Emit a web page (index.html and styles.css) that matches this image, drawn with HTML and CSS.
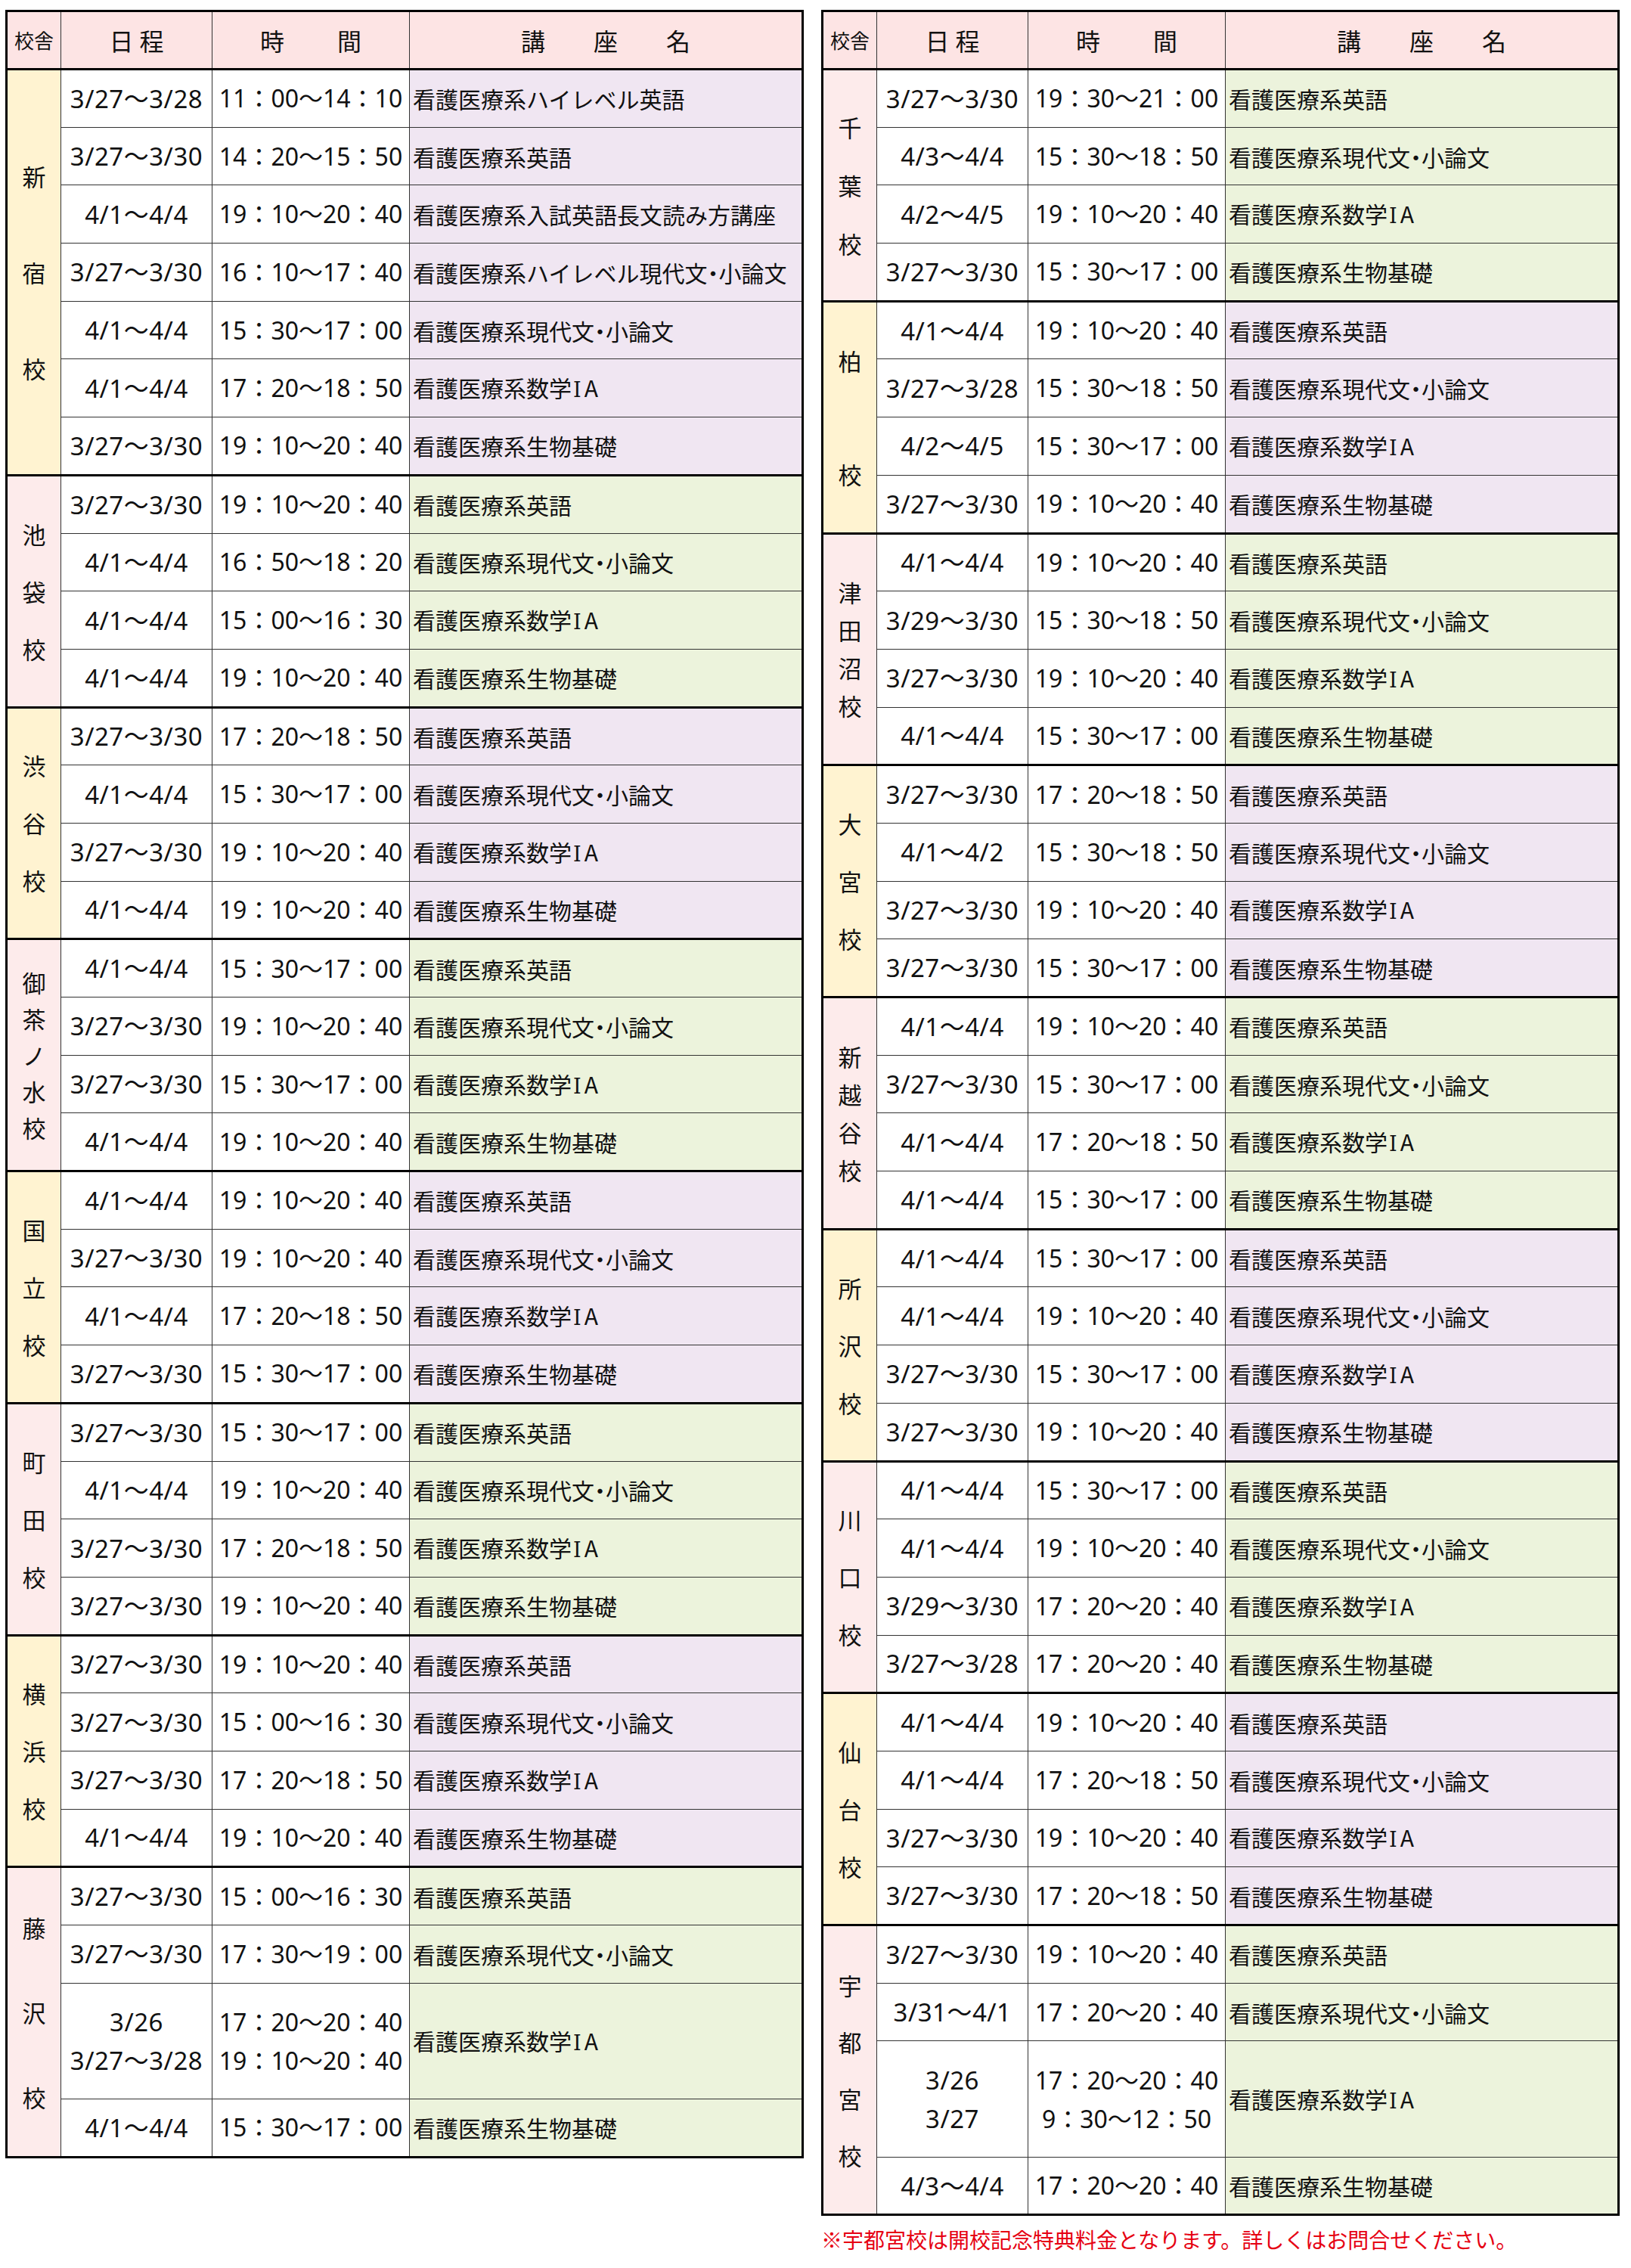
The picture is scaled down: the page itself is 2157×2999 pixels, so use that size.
FILE: index.html
```html
<!DOCTYPE html>
<html lang="ja">
<head>
<meta charset="utf-8">
<title>看護医療系 春期講習 日程</title>
<link rel="stylesheet" href="styles.css">
</head>
<body>
<div class="page">
  <div class="col">
    <table class="sched">
      <colgroup><col class="c1"><col class="c2"><col class="c3"><col class="c4"></colgroup>
      <thead>
        <tr><th class="h-campus">校舎</th><th><span class="g1">日</span>程</th><th><span class="g2">時</span>間</th><th><span class="g3">講</span><span class="g3">座</span>名</th></tr>
      </thead>
      <tbody class="grp purple">
        <tr><td class="campus" rowspan="7"><div class="vn lh127">新<br>宿<br>校</div></td><td class="date">3/27〜3/28</td><td class="time">11：00〜14：10</td><td class="course">看護医療系ハイレベル英語</td></tr>
        <tr><td class="date">3/27〜3/30</td><td class="time">14：20〜15：50</td><td class="course">看護医療系英語</td></tr>
        <tr><td class="date">4/1〜4/4</td><td class="time">19：10〜20：40</td><td class="course">看護医療系入試英語長文読み方講座</td></tr>
        <tr><td class="date">3/27〜3/30</td><td class="time">16：10〜17：40</td><td class="course">看護医療系ハイレベル現代文<span class="dot">・</span>小論文</td></tr>
        <tr><td class="date">4/1〜4/4</td><td class="time">15：30〜17：00</td><td class="course">看護医療系現代文<span class="dot">・</span>小論文</td></tr>
        <tr><td class="date">4/1〜4/4</td><td class="time">17：20〜18：50</td><td class="course">看護医療系数学<span class="rn">Ⅰ</span>A</td></tr>
        <tr><td class="date">3/27〜3/30</td><td class="time">19：10〜20：40</td><td class="course">看護医療系生物基礎</td></tr>
      </tbody>
      <tbody class="grp green">
        <tr><td class="campus" rowspan="4"><div class="vn lh76">池<br>袋<br>校</div></td><td class="date">3/27〜3/30</td><td class="time">19：10〜20：40</td><td class="course">看護医療系英語</td></tr>
        <tr><td class="date">4/1〜4/4</td><td class="time">16：50〜18：20</td><td class="course">看護医療系現代文<span class="dot">・</span>小論文</td></tr>
        <tr><td class="date">4/1〜4/4</td><td class="time">15：00〜16：30</td><td class="course">看護医療系数学<span class="rn">Ⅰ</span>A</td></tr>
        <tr><td class="date">4/1〜4/4</td><td class="time">19：10〜20：40</td><td class="course">看護医療系生物基礎</td></tr>
      </tbody>
      <tbody class="grp purple">
        <tr><td class="campus" rowspan="4"><div class="vn lh76">渋<br>谷<br>校</div></td><td class="date">3/27〜3/30</td><td class="time">17：20〜18：50</td><td class="course">看護医療系英語</td></tr>
        <tr><td class="date">4/1〜4/4</td><td class="time">15：30〜17：00</td><td class="course">看護医療系現代文<span class="dot">・</span>小論文</td></tr>
        <tr><td class="date">3/27〜3/30</td><td class="time">19：10〜20：40</td><td class="course">看護医療系数学<span class="rn">Ⅰ</span>A</td></tr>
        <tr><td class="date">4/1〜4/4</td><td class="time">19：10〜20：40</td><td class="course">看護医療系生物基礎</td></tr>
      </tbody>
      <tbody class="grp green">
        <tr><td class="campus" rowspan="4"><div class="vn lh48">御<br>茶<br>ノ<br>水<br>校</div></td><td class="date">4/1〜4/4</td><td class="time">15：30〜17：00</td><td class="course">看護医療系英語</td></tr>
        <tr><td class="date">3/27〜3/30</td><td class="time">19：10〜20：40</td><td class="course">看護医療系現代文<span class="dot">・</span>小論文</td></tr>
        <tr><td class="date">3/27〜3/30</td><td class="time">15：30〜17：00</td><td class="course">看護医療系数学<span class="rn">Ⅰ</span>A</td></tr>
        <tr><td class="date">4/1〜4/4</td><td class="time">19：10〜20：40</td><td class="course">看護医療系生物基礎</td></tr>
      </tbody>
      <tbody class="grp purple">
        <tr><td class="campus" rowspan="4"><div class="vn lh76">国<br>立<br>校</div></td><td class="date">4/1〜4/4</td><td class="time">19：10〜20：40</td><td class="course">看護医療系英語</td></tr>
        <tr><td class="date">3/27〜3/30</td><td class="time">19：10〜20：40</td><td class="course">看護医療系現代文<span class="dot">・</span>小論文</td></tr>
        <tr><td class="date">4/1〜4/4</td><td class="time">17：20〜18：50</td><td class="course">看護医療系数学<span class="rn">Ⅰ</span>A</td></tr>
        <tr><td class="date">3/27〜3/30</td><td class="time">15：30〜17：00</td><td class="course">看護医療系生物基礎</td></tr>
      </tbody>
      <tbody class="grp green">
        <tr><td class="campus" rowspan="4"><div class="vn lh76">町<br>田<br>校</div></td><td class="date">3/27〜3/30</td><td class="time">15：30〜17：00</td><td class="course">看護医療系英語</td></tr>
        <tr><td class="date">4/1〜4/4</td><td class="time">19：10〜20：40</td><td class="course">看護医療系現代文<span class="dot">・</span>小論文</td></tr>
        <tr><td class="date">3/27〜3/30</td><td class="time">17：20〜18：50</td><td class="course">看護医療系数学<span class="rn">Ⅰ</span>A</td></tr>
        <tr><td class="date">3/27〜3/30</td><td class="time">19：10〜20：40</td><td class="course">看護医療系生物基礎</td></tr>
      </tbody>
      <tbody class="grp purple">
        <tr><td class="campus" rowspan="4"><div class="vn lh76">横<br>浜<br>校</div></td><td class="date">3/27〜3/30</td><td class="time">19：10〜20：40</td><td class="course">看護医療系英語</td></tr>
        <tr><td class="date">3/27〜3/30</td><td class="time">15：00〜16：30</td><td class="course">看護医療系現代文<span class="dot">・</span>小論文</td></tr>
        <tr><td class="date">3/27〜3/30</td><td class="time">17：20〜18：50</td><td class="course">看護医療系数学<span class="rn">Ⅰ</span>A</td></tr>
        <tr><td class="date">4/1〜4/4</td><td class="time">19：10〜20：40</td><td class="course">看護医療系生物基礎</td></tr>
      </tbody>
      <tbody class="grp green">
        <tr><td class="campus" rowspan="4"><div class="vn lh112">藤<br>沢<br>校</div></td><td class="date">3/27〜3/30</td><td class="time">15：00〜16：30</td><td class="course">看護医療系英語</td></tr>
        <tr><td class="date">3/27〜3/30</td><td class="time">17：30〜19：00</td><td class="course">看護医療系現代文<span class="dot">・</span>小論文</td></tr>
        <tr class="dbl"><td class="date"><div class="two">3/26<br>3/27〜3/28</div></td><td class="time"><div class="two">17：20〜20：40<br>19：10〜20：40</div></td><td class="course">看護医療系数学<span class="rn">Ⅰ</span>A</td></tr>
        <tr><td class="date">4/1〜4/4</td><td class="time">15：30〜17：00</td><td class="course">看護医療系生物基礎</td></tr>
      </tbody>
    </table>
  </div>

  <div class="col">
    <table class="sched">
      <colgroup><col class="c1"><col class="c2"><col class="c3"><col class="c4"></colgroup>
      <thead>
        <tr><th class="h-campus">校舎</th><th><span class="g1">日</span>程</th><th><span class="g2">時</span>間</th><th><span class="g3">講</span><span class="g3">座</span>名</th></tr>
      </thead>
      <tbody class="grp green">
        <tr><td class="campus" rowspan="4"><div class="vn lh77">千<br>葉<br>校</div></td><td class="date">3/27〜3/30</td><td class="time">19：30〜21：00</td><td class="course">看護医療系英語</td></tr>
        <tr><td class="date">4/3〜4/4</td><td class="time">15：30〜18：50</td><td class="course">看護医療系現代文<span class="dot">・</span>小論文</td></tr>
        <tr><td class="date">4/2〜4/5</td><td class="time">19：10〜20：40</td><td class="course">看護医療系数学<span class="rn">Ⅰ</span>A</td></tr>
        <tr><td class="date">3/27〜3/30</td><td class="time">15：30〜17：00</td><td class="course">看護医療系生物基礎</td></tr>
      </tbody>
      <tbody class="grp purple">
        <tr><td class="campus" rowspan="4"><div class="vn lh150">柏<br>校</div></td><td class="date">4/1〜4/4</td><td class="time">19：10〜20：40</td><td class="course">看護医療系英語</td></tr>
        <tr><td class="date">3/27〜3/28</td><td class="time">15：30〜18：50</td><td class="course">看護医療系現代文<span class="dot">・</span>小論文</td></tr>
        <tr><td class="date">4/2〜4/5</td><td class="time">15：30〜17：00</td><td class="course">看護医療系数学<span class="rn">Ⅰ</span>A</td></tr>
        <tr><td class="date">3/27〜3/30</td><td class="time">19：10〜20：40</td><td class="course">看護医療系生物基礎</td></tr>
      </tbody>
      <tbody class="grp green">
        <tr><td class="campus" rowspan="4"><div class="vn lh50">津<br>田<br>沼<br>校</div></td><td class="date">4/1〜4/4</td><td class="time">19：10〜20：40</td><td class="course">看護医療系英語</td></tr>
        <tr><td class="date">3/29〜3/30</td><td class="time">15：30〜18：50</td><td class="course">看護医療系現代文<span class="dot">・</span>小論文</td></tr>
        <tr><td class="date">3/27〜3/30</td><td class="time">19：10〜20：40</td><td class="course">看護医療系数学<span class="rn">Ⅰ</span>A</td></tr>
        <tr><td class="date">4/1〜4/4</td><td class="time">15：30〜17：00</td><td class="course">看護医療系生物基礎</td></tr>
      </tbody>
      <tbody class="grp purple">
        <tr><td class="campus" rowspan="4"><div class="vn lh76">大<br>宮<br>校</div></td><td class="date">3/27〜3/30</td><td class="time">17：20〜18：50</td><td class="course">看護医療系英語</td></tr>
        <tr><td class="date">4/1〜4/2</td><td class="time">15：30〜18：50</td><td class="course">看護医療系現代文<span class="dot">・</span>小論文</td></tr>
        <tr><td class="date">3/27〜3/30</td><td class="time">19：10〜20：40</td><td class="course">看護医療系数学<span class="rn">Ⅰ</span>A</td></tr>
        <tr><td class="date">3/27〜3/30</td><td class="time">15：30〜17：00</td><td class="course">看護医療系生物基礎</td></tr>
      </tbody>
      <tbody class="grp green">
        <tr><td class="campus" rowspan="4"><div class="vn lh50">新<br>越<br>谷<br>校</div></td><td class="date">4/1〜4/4</td><td class="time">19：10〜20：40</td><td class="course">看護医療系英語</td></tr>
        <tr><td class="date">3/27〜3/30</td><td class="time">15：30〜17：00</td><td class="course">看護医療系現代文<span class="dot">・</span>小論文</td></tr>
        <tr><td class="date">4/1〜4/4</td><td class="time">17：20〜18：50</td><td class="course">看護医療系数学<span class="rn">Ⅰ</span>A</td></tr>
        <tr><td class="date">4/1〜4/4</td><td class="time">15：30〜17：00</td><td class="course">看護医療系生物基礎</td></tr>
      </tbody>
      <tbody class="grp purple">
        <tr><td class="campus" rowspan="4"><div class="vn lh76">所<br>沢<br>校</div></td><td class="date">4/1〜4/4</td><td class="time">15：30〜17：00</td><td class="course">看護医療系英語</td></tr>
        <tr><td class="date">4/1〜4/4</td><td class="time">19：10〜20：40</td><td class="course">看護医療系現代文<span class="dot">・</span>小論文</td></tr>
        <tr><td class="date">3/27〜3/30</td><td class="time">15：30〜17：00</td><td class="course">看護医療系数学<span class="rn">Ⅰ</span>A</td></tr>
        <tr><td class="date">3/27〜3/30</td><td class="time">19：10〜20：40</td><td class="course">看護医療系生物基礎</td></tr>
      </tbody>
      <tbody class="grp green">
        <tr><td class="campus" rowspan="4"><div class="vn lh76">川<br>口<br>校</div></td><td class="date">4/1〜4/4</td><td class="time">15：30〜17：00</td><td class="course">看護医療系英語</td></tr>
        <tr><td class="date">4/1〜4/4</td><td class="time">19：10〜20：40</td><td class="course">看護医療系現代文<span class="dot">・</span>小論文</td></tr>
        <tr><td class="date">3/29〜3/30</td><td class="time">17：20〜20：40</td><td class="course">看護医療系数学<span class="rn">Ⅰ</span>A</td></tr>
        <tr><td class="date">3/27〜3/28</td><td class="time">17：20〜20：40</td><td class="course">看護医療系生物基礎</td></tr>
      </tbody>
      <tbody class="grp purple">
        <tr><td class="campus" rowspan="4"><div class="vn lh76">仙<br>台<br>校</div></td><td class="date">4/1〜4/4</td><td class="time">19：10〜20：40</td><td class="course">看護医療系英語</td></tr>
        <tr><td class="date">4/1〜4/4</td><td class="time">17：20〜18：50</td><td class="course">看護医療系現代文<span class="dot">・</span>小論文</td></tr>
        <tr><td class="date">3/27〜3/30</td><td class="time">19：10〜20：40</td><td class="course">看護医療系数学<span class="rn">Ⅰ</span>A</td></tr>
        <tr><td class="date">3/27〜3/30</td><td class="time">17：20〜18：50</td><td class="course">看護医療系生物基礎</td></tr>
      </tbody>
      <tbody class="grp green">
        <tr><td class="campus" rowspan="4"><div class="vn lh75">宇<br>都<br>宮<br>校</div></td><td class="date">3/27〜3/30</td><td class="time">19：10〜20：40</td><td class="course">看護医療系英語</td></tr>
        <tr><td class="date">3/31〜4/1</td><td class="time">17：20〜20：40</td><td class="course">看護医療系現代文<span class="dot">・</span>小論文</td></tr>
        <tr class="dbl"><td class="date"><div class="two">3/26<br>3/27</div></td><td class="time"><div class="two">17：20〜20：40<br>9：30〜12：50</div></td><td class="course">看護医療系数学<span class="rn">Ⅰ</span>A</td></tr>
        <tr><td class="date">4/3〜4/4</td><td class="time">17：20〜20：40</td><td class="course">看護医療系生物基礎</td></tr>
      </tbody>
    </table>
    <p class="note">※宇都宮校は開校記念特典料金となります。詳しくはお問合せください。</p>
  </div>
</div>
</body>
</html>
```

FILE: styles.css
```css
html, body {
  margin: 0;
  padding: 0;
  background: #ffffff;
}

body {
  font-family: "Noto Sans CJK JP", "Noto Sans", sans-serif;
  color: #111111;
}

.page {
  display: flex;
  align-items: flex-start;
  gap: 23px;
  padding: 13px 0 0 7px;
}

.col {
  display: flex;
  flex-direction: column;
}

.sched {
  border-collapse: collapse;
  table-layout: fixed;
  width: 1053px;
  border: 3px solid #000000;
}

.c1 { width: 72px; }
.c2 { width: 200px; }
.c3 { width: 261px; }
.c4 { width: 520px; }

.sched th,
.sched td {
  border: 1px solid #333333;
  padding: 0;
  font-weight: normal;
  white-space: nowrap;
  overflow: hidden;
}

.sched thead tr {
  height: 77px;
}

.sched thead th {
  background: #fde4e4;
  font-size: 32px;
  line-height: 1;
  text-align: center;
  border-bottom: 3px solid #000000;
}

.sched thead th.h-campus {
  font-size: 26px;
}

.g1 { margin-right: 8px; }
.g2 { margin-right: 70px; }
.g3 { margin-right: 64px; }

.grp {
  border-top: 3px solid #000000;
}

.sched tbody tr {
  height: 76.7px;
}

.sched tbody tr.dbl {
  height: 153.4px;
}

.date,
.time {
  text-align: center;
  font-family: "Noto Sans", "Noto Sans CJK JP", sans-serif;
  line-height: 1;
  background: #ffffff;
}

.date {
  font-size: 33px;
  letter-spacing: 0.5px;
}

.time {
  font-size: 32px;
}

.course {
  font-size: 30px;
  line-height: 1;
  padding-left: 4px !important;
  text-align: left;
}

.dot {
  font-feature-settings: "halt" 1;
}

.rn {
  font-family: "DejaVu Serif", "Liberation Serif", serif;
  font-size: 27px;
  margin: 0 4px 0 2px;
}

.two {
  line-height: 51px;
}

.campus {
  text-align: center;
  vertical-align: middle;
  font-size: 31px;
}

.vn { line-height: 76px; }
.lh48 { line-height: 48px; }
.lh50 { line-height: 50px; }
.lh75 { line-height: 75px; }
.lh76 { line-height: 76px; }
.lh77 { line-height: 77px; }
.lh112 { line-height: 112px; }
.lh127 { line-height: 127px; }
.lh150 { line-height: 150px; }

.purple .campus { background: #fff3d1; }
.purple .course { background: #f0e6f2; }
.green .campus { background: #fdebeb; }
.green .course { background: #ecf3dc; }

.note {
  margin: 15px 0 0 0;
  font-size: 28px;
  line-height: 1.2;
  color: #e60012;
  white-space: nowrap;
}
```
